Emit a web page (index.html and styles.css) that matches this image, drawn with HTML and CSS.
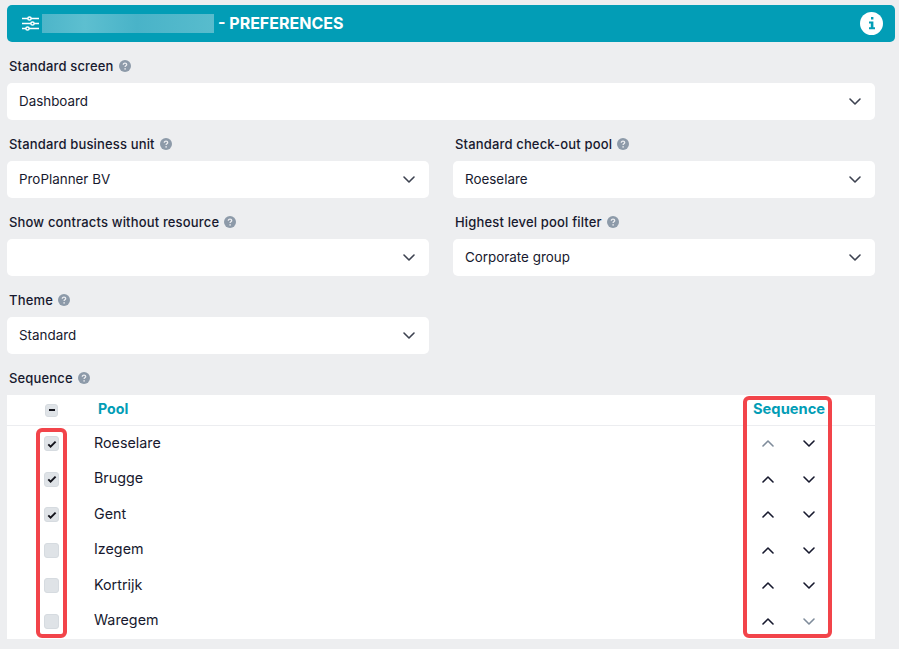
FILE: index.html
```html
<!DOCTYPE html>
<html lang="en">
<head>
<meta charset="utf-8">
<title>Preferences</title>
<link rel="stylesheet" href="styles.css">
</head>
<body>
<svg class="defs" width="0" height="0" aria-hidden="true">
  <symbol id="down" viewBox="0 0 14 9"><path d="M2 2 7 7l5-5" fill="none" stroke="currentColor" stroke-width="1.6" stroke-linecap="round" stroke-linejoin="round"/></symbol>
  <symbol id="up" viewBox="0 0 14 9"><path d="M2 7 7 2l5 5" fill="none" stroke="currentColor" stroke-width="1.6" stroke-linecap="round" stroke-linejoin="round"/></symbol>
  <symbol id="help" viewBox="0 0 12 12"><circle cx="6" cy="6" r="6" fill="#8d9aa9"/><path d="M4.3 4.7c0-1 .8-1.6 1.7-1.6s1.7.6 1.7 1.5c0 1.2-1.6 1.2-1.6 2.4" fill="none" stroke="#ecedf0" stroke-width="1.3"/><circle cx="6.1" cy="8.9" r=".8" fill="#ecedf0"/></symbol>
  <symbol id="tick" viewBox="0 0 10 8"><path d="M1.3 4.3 3.6 6.6 8.6 1.6" fill="none" stroke="#14141c" stroke-width="1.9"/></symbol>
</svg>
<div class="page">
  <header class="bar">
    <svg class="sliders" width="17" height="17" viewBox="0 0 17 17" aria-hidden="true">
      <g fill="none" stroke="#fff" stroke-width="1.5">
        <path d="M0 3.5h6M9 3.5h8M0 8.5h9M12 8.5h5M0 13.5h4M7 13.5h10"/>
        <circle cx="7.5" cy="3.5" r="1.6"/><circle cx="10.5" cy="8.5" r="1.6"/><circle cx="5.5" cy="13.5" r="1.6"/>
      </g>
    </svg>
    <span class="blurred"></span>
    <h1 class="title">- PREFERENCES</h1>
    <span class="info"><svg width="10" height="13" viewBox="0 0 10 13" aria-hidden="true"><path d="M4 0h2.4v2.4H4zM2 4.4h4.4v5.8H8v2H2v-2h1.8V6.4H2z" fill="#029db6"/></svg></span>
  </header>

  <div class="form">
    <div class="field wide">
      <div class="label">Standard screen <svg class="help"><use href="#help"/></svg></div>
      <div class="select"><span>Dashboard</span><svg class="caret"><use href="#down"/></svg></div>
    </div>
    <div class="field">
      <div class="label">Standard business unit <svg class="help"><use href="#help"/></svg></div>
      <div class="select"><span>ProPlanner BV</span><svg class="caret"><use href="#down"/></svg></div>
    </div>
    <div class="field">
      <div class="label">Standard check-out pool <svg class="help"><use href="#help"/></svg></div>
      <div class="select"><span>Roeselare</span><svg class="caret"><use href="#down"/></svg></div>
    </div>
    <div class="field">
      <div class="label">Show contracts without resource <svg class="help"><use href="#help"/></svg></div>
      <div class="select"><span></span><svg class="caret"><use href="#down"/></svg></div>
    </div>
    <div class="field">
      <div class="label">Highest level pool filter <svg class="help"><use href="#help"/></svg></div>
      <div class="select"><span>Corporate group</span><svg class="caret"><use href="#down"/></svg></div>
    </div>
    <div class="field">
      <div class="label">Theme <svg class="help"><use href="#help"/></svg></div>
      <div class="select"><span>Standard</span><svg class="caret"><use href="#down"/></svg></div>
    </div>
  </div>

  <div class="label seq-label">Sequence <svg class="help"><use href="#help"/></svg></div>
  <div class="table">
    <div class="head">
      <span class="check small"><span class="dash"></span></span>
      <span class="th-pool">Pool</span>
      <span class="th-seq">Sequence</span>
    </div>
    <div class="row"><span class="check"><svg class="tick"><use href="#tick"/></svg></span><span class="name">Roeselare</span><span class="arrows"><svg class="arrow off"><use href="#up"/></svg><svg class="arrow"><use href="#down"/></svg></span></div>
    <div class="row"><span class="check"><svg class="tick"><use href="#tick"/></svg></span><span class="name">Brugge</span><span class="arrows"><svg class="arrow"><use href="#up"/></svg><svg class="arrow"><use href="#down"/></svg></span></div>
    <div class="row"><span class="check"><svg class="tick"><use href="#tick"/></svg></span><span class="name">Gent</span><span class="arrows"><svg class="arrow"><use href="#up"/></svg><svg class="arrow"><use href="#down"/></svg></span></div>
    <div class="row"><span class="check"></span><span class="name">Izegem</span><span class="arrows"><svg class="arrow"><use href="#up"/></svg><svg class="arrow"><use href="#down"/></svg></span></div>
    <div class="row"><span class="check"></span><span class="name">Kortrijk</span><span class="arrows"><svg class="arrow"><use href="#up"/></svg><svg class="arrow"><use href="#down"/></svg></span></div>
    <div class="row"><span class="check"></span><span class="name">Waregem</span><span class="arrows"><svg class="arrow"><use href="#up"/></svg><svg class="arrow off"><use href="#down"/></svg></span></div>
    <div class="mark mark-checks"></div>
    <div class="mark mark-seq"></div>
  </div>
</div>
</body>
</html>
```

FILE: styles.css
```css
* { box-sizing: border-box; }
html, body { margin: 0; height: 100%; }
body {
  background: #edeef0;
  color: #17192e;
  font-family: "Inter", "Liberation Sans", sans-serif;
  overflow: hidden;
}
.defs { position: absolute; }
.page { padding: 5px 4px 0 7px; }

.bar {
  display: flex;
  align-items: center;
  height: 37px;
  background: #029db6;
  border-radius: 5px;
  padding: 0 12px 0 15px;
  color: #fff;
}
.sliders { flex: none; }
.blurred {
  width: 172px;
  height: 19px;
  margin: 0 4px 0 3px;
  background: linear-gradient(90deg, #4db5c9, #5dbfd0 25%, #49b3c8 55%, #58bccd);
  flex: none;
}
.title { margin: 0 0 2px; font-size: 16px; font-weight: 700; flex: 1; }
.info {
  width: 23px; height: 23px; border-radius: 50%; background: #fff;
  display: flex; align-items: center; justify-content: center;
}

.form {
  display: grid;
  grid-template-columns: 422px 422px;
  column-gap: 24px;
  row-gap: 14px;
  margin-top: 14px;
}
.field.wide { grid-column: 1 / -1; }
.label {
  display: flex;
  align-items: center;
  gap: 5px;
  height: 20px;
  margin-bottom: 7px;
  padding-left: 2px;
  font-size: 13px;
  font-weight: 500;
  letter-spacing: .16px;
  white-space: nowrap;
}
.help { width: 12px; height: 12px; flex: none; }
.select {
  display: flex;
  align-items: center;
  justify-content: space-between;
  height: 37px;
  background: #fff;
  border-radius: 5px;
  padding: 0 13px 0 12px;
  font-size: 13.4px;
}
.select span { padding-bottom: 2px; }
.caret { width: 14px; height: 9px; color: #3d4250; }

.seq-label { margin-top: 14px; }
.table { position: relative; width: 868px; background: #fff; }
.head {
  display: grid;
  grid-template-columns: 91px 1fr 122px;
  align-items: center;
  height: 31px;
  border-bottom: 1px solid #ecedf0;
}
.th-pool, .th-seq { color: #029db6; font-weight: 700; white-space: nowrap; padding-bottom: 3px; }
.th-pool { font-size: 14.2px; }
.th-seq { font-size: 14.7px; }
.row {
  display: grid;
  grid-template-columns: 87px 1fr 55px;
  align-items: center;
  height: 35.5px;
  padding-right: 59px;
}
.check {
  justify-self: start;
  margin-left: 37px;
  width: 15px; height: 15px;
  border: 1px solid #d6dbe0;
  border-radius: 3px;
  background: #dfe3e7;
  display: flex; align-items: center; justify-content: center;
}
.check.small { width: 13px; height: 13px; margin-left: 38px; }
.dash { width: 6px; height: 2px; background: #14141c; }
.tick { width: 10px; height: 8px; }
.name { font-size: 14.3px; padding-bottom: 3px; }
.arrows { display: flex; justify-content: space-between; }
.arrow { width: 14px; height: 9px; color: #17192e; }
.arrow.off { color: #7f8c9b; }

.mark {
  position: absolute;
  border: 4px solid #f2444a;
  border-radius: 6px;
  pointer-events: none;
}
.mark-checks { left: 29px; top: 33px; width: 31px; height: 210px; }
.mark-seq { left: 736px; top: 1px; width: 89px; height: 242px; }
```
